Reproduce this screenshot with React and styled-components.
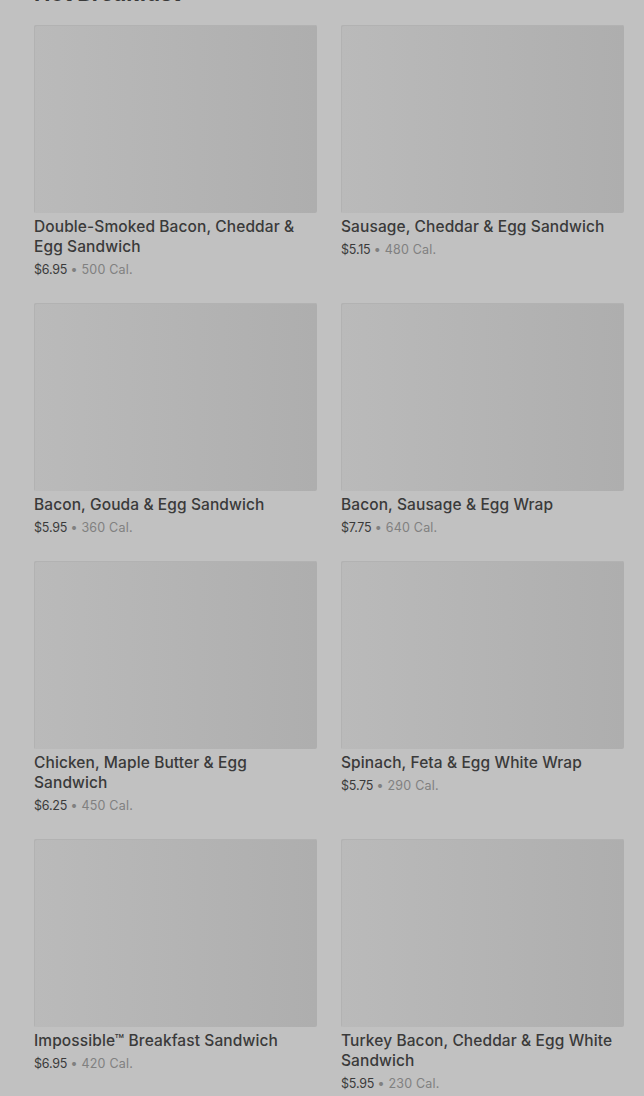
import styled, { createGlobalStyle } from "styled-components";

const GlobalStyle = createGlobalStyle`
  html, body {
    margin: 0;
    padding: 0;
    background: #c1c1c1;
    font-family: Inter, "Noto Sans", sans-serif;
  }
`;

const Page = styled.div`
  padding: 0 20px 0 34px;
  overflow: hidden;
`;

const Heading = styled.h2`
  margin: -21px 0 0;
  font-size: 22px;
  line-height: 28px;
  font-weight: 700;
  color: #3a3a3a;
`;

const Grid = styled.div`
  margin-top: 18px;
  display: grid;
  grid-template-columns: 283px 283px;
  column-gap: 24px;
  row-gap: 23px;
`;

const Card = styled.div`
  display: flex;
  flex-direction: column;
`;

const Photo = styled.div`
  height: 188px;
  background: linear-gradient(90deg, #bababa 0%, #b4b4b4 50%, #aeaeae 100%);
  box-shadow: inset 1px 1px 0 #b2b2b2;
  border-radius: 2px;
`;

const Name = styled.div`
  margin-top: 4px;
  font-size: 15.5px;
  line-height: 20px;
  font-weight: 500;
  color: #3a3a3a;
  letter-spacing: 0.1px;
`;

const Meta = styled.div`
  margin-top: 3px;
  font-size: 12.5px;
  line-height: 20px;
  color: #3a3a3a;
  letter-spacing: -0.2px;
`;

const Cal = styled.span`
  color: #808080;
  letter-spacing: 0.2px;
`;

const items = [
  ["Double-Smoked Bacon, Cheddar & Egg Sandwich", "$6.95", "500"],
  ["Sausage, Cheddar & Egg Sandwich", "$5.15", "480"],
  ["Bacon, Gouda & Egg Sandwich", "$5.95", "360"],
  ["Bacon, Sausage & Egg Wrap", "$7.75", "640"],
  ["Chicken, Maple Butter & Egg Sandwich", "$6.25", "450"],
  ["Spinach, Feta & Egg White Wrap", "$5.75", "290"],
  ["Impossible™ Breakfast Sandwich", "$6.95", "420"],
  ["Turkey Bacon, Cheddar & Egg White Sandwich", "$5.95", "230"],
];

export default function App() {
  return (
    <Page>
      <GlobalStyle />
      <Heading>Hot Breakfast</Heading>
      <Grid>
        {items.map(([name, price, cal]) => (
          <Card key={name}>
            <Photo />
            <Name>{name}</Name>
            <Meta>
              {price} <Cal>• {cal} Cal.</Cal>
            </Meta>
          </Card>
        ))}
      </Grid>
    </Page>
  );
}
